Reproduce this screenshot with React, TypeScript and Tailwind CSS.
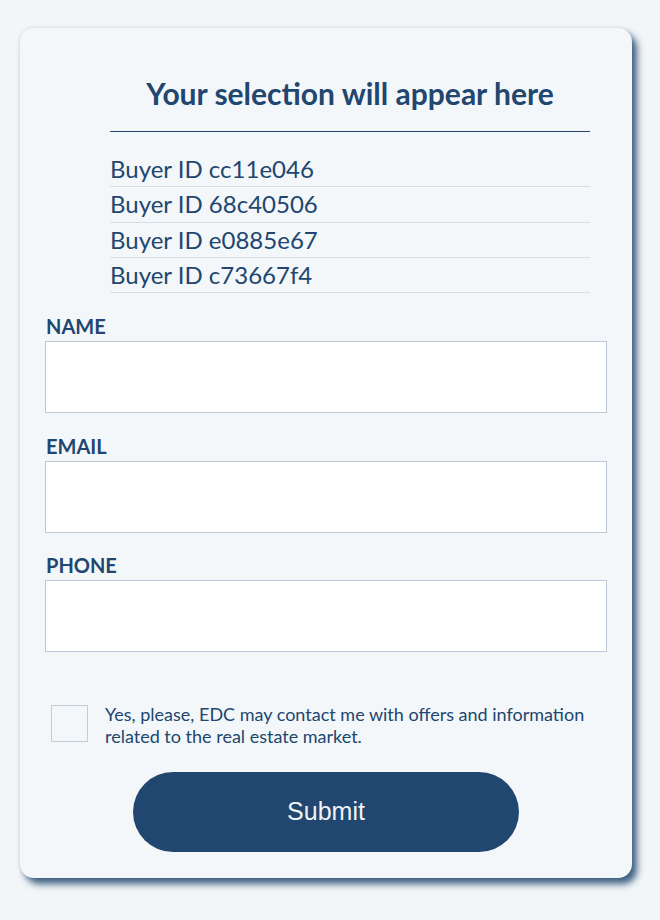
import React, { useState } from 'react';

const buyers = ['cc11e046', '68c40506', 'e0885e67', 'c73667f4'];

function Field({ label, type = 'text' }: { label: string; type?: string }) {
  return (
    <div className="flex flex-col">
      <label className="text-[20px] leading-[22px] font-bold text-[#21466f] pl-[1px] mb-[4px]">{label}</label>
      <input
        type={type}
        className="w-full h-[72px] bg-white border border-[#bcc8d6] px-3 text-[18px] text-[#21466f] focus:outline-none"
      />
    </div>
  );
}

export default function App() {
  const [agree, setAgree] = useState(false);

  return (
    <div className="min-h-[920px] bg-[#f2f6f8] pt-[28px] font-['Lato','Noto_Sans',sans-serif]">
      <div className="ml-[20px] w-[612px] h-[850px] rounded-[14px] bg-[#f3f7f9] shadow-[0_0_4px_rgba(33,70,111,0.15),5px_6px_7px_rgba(33,70,111,0.85)] pt-[48px]">
        <div className="ml-[90px] mr-[42px]">
          <h2 className="text-[30px] leading-[34px] font-bold text-[#21466f] text-center pb-[21px] border-b border-[#21466f]">
            Your selection will appear here
          </h2>
          <ul className="mt-[20px]">
            {buyers.map((id) => (
              <li key={id} className="h-[35.3px] flex items-center border-b border-[#d3dee3] text-[24px] text-[#21466f]">
                Buyer ID {id}
              </li>
            ))}
          </ul>
        </div>

        <form className="mx-[25px] mt-[22px] flex flex-col gap-[21.5px]" onSubmit={(e) => e.preventDefault()}>
          <Field label="NAME" />
          <Field label="EMAIL" type="email" />
          <Field label="PHONE" type="tel" />
        </form>

        <div className="flex items-start mt-[51px] ml-[31px] mr-[30px]">
          <button
            type="button"
            onClick={() => setAgree(!agree)}
            className="mt-[2px] w-[37px] h-[37px] shrink-0 border border-[#c0ccd8] bg-[#f3f7f9]"
          >
            {agree && <span className="text-[#21466f] text-[20px]">✓</span>}
          </button>
          <p className="ml-[17px] text-[18px] leading-[22px] text-[#21466f]">
            Yes, please, EDC may contact me with offers and information related to the real estate market.
          </p>
        </div>

        <button
          type="submit"
          className="block mx-auto mt-[25px] w-[386px] h-[80px] rounded-full bg-[#21466f] text-[#eef2f5] text-[25px] font-['Liberation_Sans',Arial,sans-serif]"
        >
          Submit
        </button>
      </div>
    </div>
  );
}
